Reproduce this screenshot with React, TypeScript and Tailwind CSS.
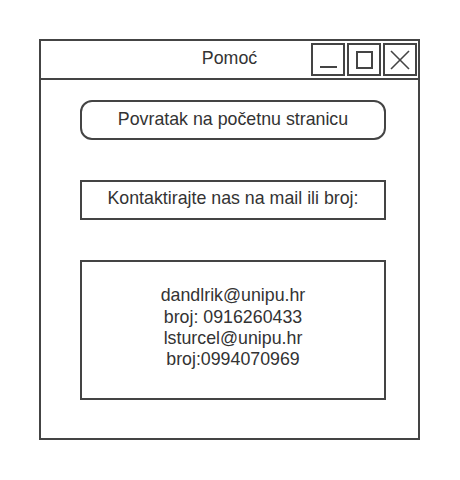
import React from "react";

export default function App() {
  return (
    <div className="w-[460px] h-[480px] bg-white pt-[39px] pl-[39px] font-['Liberation_Sans',Arial,sans-serif] text-[#333]">
      <div className="w-[381px] h-[401px] border-2 border-[#444] flex flex-col">
        <div className="h-[39px] border-b-2 border-[#444] grid grid-cols-[1fr_auto_1fr] shrink-0">
          <div />
          <div className="flex items-center justify-center text-[17.8px] leading-none pb-[1px]">Pomoć</div>
          <div className="flex justify-end items-start pt-[2px] pr-[1px] gap-[2px]">
            <div className="w-[34px] h-[33px] border-2 border-[#444]">
              <svg width="30" height="29" viewBox="0 0 30 29">
                <line x1="7" y1="22" x2="24" y2="22" stroke="#444" strokeWidth="2" />
              </svg>
            </div>
            <div className="w-[34px] h-[33px] border-2 border-[#444]">
              <svg width="30" height="29" viewBox="0 0 30 29">
                <rect x="8" y="7" width="15" height="16" fill="none" stroke="#444" strokeWidth="2" />
              </svg>
            </div>
            <div className="w-[34px] h-[33px] border-2 border-[#444]">
              <svg width="30" height="29" viewBox="0 0 30 29">
                <line x1="6" y1="6" x2="24" y2="24" stroke="#444" strokeWidth="1.6" />
                <line x1="24" y1="6" x2="6" y2="24" stroke="#444" strokeWidth="1.6" />
              </svg>
            </div>
          </div>
        </div>
        <div className="flex flex-col pl-[39px] pt-[20px] gap-[40px]">
          <div className="w-[306px] h-[40px] border-2 border-[#444] rounded-[12px] flex items-center justify-center text-[17.8px] leading-none">
            Povratak na početnu stranicu
          </div>
          <div className="w-[306px] h-[40px] border-2 border-[#444] flex items-center justify-center text-[17.8px] leading-none pb-[2px]">
            Kontaktirajte nas na mail ili broj:
          </div>
          <div className="w-[306px] h-[140px] border-2 border-[#444] flex flex-col items-center justify-center text-[17.8px] leading-[21.3px] pb-[4px]">
            <div>dandlrik@unipu.hr</div>
            <div>broj: 0916260433</div>
            <div>lsturcel@unipu.hr</div>
            <div>broj:0994070969</div>
          </div>
        </div>
      </div>
    </div>
  );
}
